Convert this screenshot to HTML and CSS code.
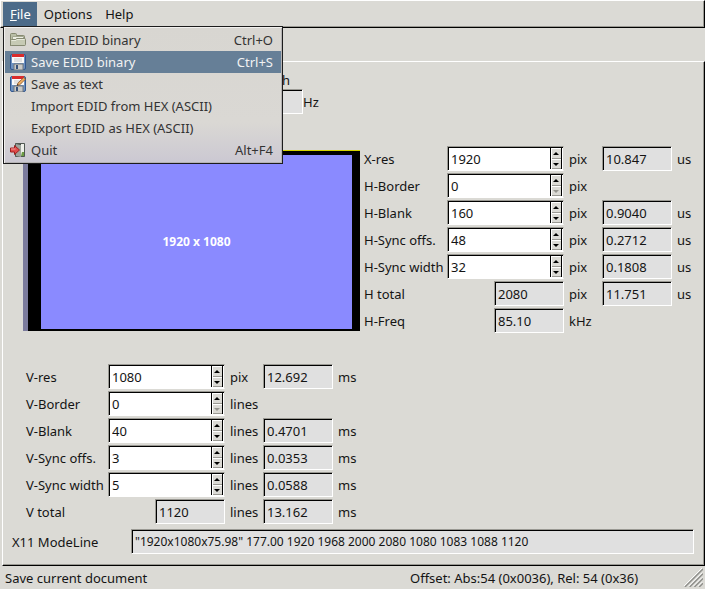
FILE: index.html
```html
<!DOCTYPE html>
<html lang="en">
<head>
<meta charset="utf-8">
<title>EDID editor</title>
<link rel="stylesheet" href="styles.css">
</head>
<body>
<header class="menubar">
  <nav class="menus">
    <button class="menu-title active" type="button"><u>F</u>ile</button>
    <button class="menu-title" type="button">Options</button>
    <button class="menu-title" type="button">Help</button>
  </nav>
  <div class="menu" role="menu">
    <button class="item" role="menuitem" type="button">
      <svg class="icon" viewBox="0 0 16 16"><path d="M.5 13.5v-11q0-1 1-1h4q1 0 1 1v1h7q1 0 1 1v9z" fill="#b9bea6" stroke="#85896f"/><path d="M2.500 7V4.500h11V7" fill="#eceee2" stroke="#a3a790"/><path d="M.5 13.500v-5q0-1 1-1h4l1-1h8q1 0 1 1v5q0 1-1 1h-13q-1 0-1-1z" fill="#c6cab4" stroke="#868a72"/><path d="M1.500 8.500h4.500l1-1h7.500" fill="none" stroke="#e6e9db"/></svg>
      <span>Open EDID binary</span><kbd>Ctrl+O</kbd>
    </button>
    <button class="item selected" role="menuitem" type="button">
      <svg class="icon" viewBox="0 0 16 16"><rect x=".5" y=".5" width="15" height="15" rx="1.5" fill="#6d91c0" stroke="#31578f"/><path d="M2 1h12v8H2z" fill="#fafafa"/><path d="M2 0h12v3H2z" fill="#d92b2b"/><path d="M4 5h8M4 7h8" stroke="#c8c8c8"/><path d="M4 10h9v6H4z" fill="#c9c9c6" stroke="#71777d"/><path d="M6 11h2v4H6z" fill="#355079"/></svg>
      <span>Save EDID binary</span><kbd>Ctrl+S</kbd>
    </button>
    <button class="item" role="menuitem" type="button">
      <svg class="icon" viewBox="0 0 16 16"><rect x=".5" y=".5" width="15" height="15" rx="1.5" fill="#6d91c0" stroke="#31578f"/><path d="M2 1h12v8H2z" fill="#fafafa"/><path d="M2 0h12v3H2z" fill="#d92b2b"/><path d="M4 5h8M4 7h8" stroke="#c8c8c8"/><path d="M4 10h9v6H4z" fill="#c9c9c6" stroke="#71777d"/><path d="M6 11h2v4H6z" fill="#355079"/><path d="M7 9.5l1-2.6 5.8-5.4 1.7 1.7L9.7 8.8z" fill="#edae63" stroke="#8b572a" stroke-width=".8"/><path d="M7 9.5l.5-1.5 1 1z" fill="#222"/></svg>
      <span>Save as text</span>
    </button>
    <button class="item" role="menuitem" type="button"><i class="icon"></i><span>Import EDID from HEX (ASCII)</span></button>
    <button class="item" role="menuitem" type="button"><i class="icon"></i><span>Export EDID as HEX (ASCII)</span></button>
    <button class="item" role="menuitem" type="button">
      <svg class="icon" viewBox="0 0 16 16"><path d="M5.500 1.500h9v13h-9z" fill="#3f4743" stroke="#505852"/><path d="M11 2h3v12h-3z" fill="#eef0ea"/><path d="M12 10h2v4h-3z" fill="#6c9b45"/><path d="M6 2l5 1v12l-5-1z" fill="#9ea49d"/><path d="M.5 6h4V3.500L9.500 8 4.500 12.500V10h-4z" fill="#e14b4b" stroke="#9d2020"/><path d="M1 7h4.500" stroke="#f29b9b"/></svg>
      <span>Quit</span><kbd>Alt+F4</kbd>
    </button>
  </div>
</header>

<main class="panel">
  <div class="rate">
    <label for="rate">h</label>
    <div class="rate-row"><input class="field out" id="rate" readonly><span>Hz</span></div>
  </div>

  <div class="upper">
    <div class="preview"><div class="active-area">1920 x 1080</div></div>
    <div class="grid horizontal">
      <label for="xres">X-res</label>
      <div class="spin"><input id="xres" value="1920"><div class="arrows"><button type="button" aria-label="Up"></button><button type="button" aria-label="Down"></button></div></div>
      <span>pix</span><input class="field out" aria-label="X-res time" value="10.847" readonly><span>us</span>

      <label for="hborder">H-Border</label>
      <div class="spin"><input id="hborder" value="0"><div class="arrows"><button type="button" aria-label="Up"></button><button type="button" aria-label="Down" disabled></button></div></div>
      <span class="wide">pix</span>

      <label for="hblank">H-Blank</label>
      <div class="spin"><input id="hblank" value="160"><div class="arrows"><button type="button" aria-label="Up"></button><button type="button" aria-label="Down"></button></div></div>
      <span>pix</span><input class="field out" aria-label="H-Blank time" value="0.9040" readonly><span>us</span>

      <label for="hoffs">H-Sync offs.</label>
      <div class="spin"><input id="hoffs" value="48"><div class="arrows"><button type="button" aria-label="Up"></button><button type="button" aria-label="Down"></button></div></div>
      <span>pix</span><input class="field out" aria-label="H-Sync offset time" value="0.2712" readonly><span>us</span>

      <label for="hwidth">H-Sync width</label>
      <div class="spin"><input id="hwidth" value="32"><div class="arrows"><button type="button" aria-label="Up"></button><button type="button" aria-label="Down"></button></div></div>
      <span>pix</span><input class="field out" aria-label="H-Sync width time" value="0.1808" readonly><span>us</span>

      <label for="htotal">H total</label>
      <input class="field out" id="htotal" value="2080" readonly>
      <span>pix</span><input class="field out" aria-label="H total time" value="11.751" readonly><span>us</span>

      <label for="hfreq">H-Freq</label>
      <input class="field out" id="hfreq" value="85.10" readonly>
      <span class="wide">kHz</span>
    </div>
  </div>

  <div class="grid vertical">
    <label for="vres">V-res</label>
    <div class="spin"><input id="vres" value="1080"><div class="arrows"><button type="button" aria-label="Up"></button><button type="button" aria-label="Down"></button></div></div>
    <span>pix</span><input class="field out" aria-label="V-res time" value="12.692" readonly><span>ms</span>

    <label for="vborder">V-Border</label>
    <div class="spin"><input id="vborder" value="0"><div class="arrows"><button type="button" aria-label="Up"></button><button type="button" aria-label="Down" disabled></button></div></div>
    <span class="wide">lines</span>

    <label for="vblank">V-Blank</label>
    <div class="spin"><input id="vblank" value="40"><div class="arrows"><button type="button" aria-label="Up"></button><button type="button" aria-label="Down"></button></div></div>
    <span>lines</span><input class="field out" aria-label="V-Blank time" value="0.4701" readonly><span>ms</span>

    <label for="voffs">V-Sync offs.</label>
    <div class="spin"><input id="voffs" value="3"><div class="arrows"><button type="button" aria-label="Up"></button><button type="button" aria-label="Down"></button></div></div>
    <span>lines</span><input class="field out" aria-label="V-Sync offset time" value="0.0353" readonly><span>ms</span>

    <label for="vwidth">V-Sync width</label>
    <div class="spin"><input id="vwidth" value="5"><div class="arrows"><button type="button" aria-label="Up"></button><button type="button" aria-label="Down"></button></div></div>
    <span>lines</span><input class="field out" aria-label="V-Sync width time" value="0.0588" readonly><span>ms</span>

    <label for="vtotal">V total</label>
    <input class="field out" id="vtotal" value="1120" readonly>
    <span>lines</span><input class="field out" aria-label="V total time" value="13.162" readonly><span>ms</span>
  </div>

  <div class="modeline">
    <label for="modeline">X11 ModeLine</label>
    <input class="field" id="modeline" value="&quot;1920x1080x75.98&quot; 177.00 1920 1968 2000 2080 1080 1083 1088 1120" readonly>
  </div>
</main>

<footer class="status">
  <span>Save current document</span>
  <span class="offset">Offset: Abs:54 (0x0036), Rel: 54 (0x36)</span>
  <svg class="grip" viewBox="0 0 20 20"><g stroke="#fff"><path d="M0 19L19 0M5 19L19 5M10 19L19 10M15 19l4-4"/></g><g stroke="#8f8f8b" stroke-width="1.500"><path d="M1 20L20 1M6 20L20 6M11 20l9-9M16 20l4-4"/></g></svg>
</footer>
</body>
</html>
```
FILE: styles.css
```css
:root {
  --face: #dbdad5;
  --shade: #9a9993;
  --out: #e0e0e0;
}

* {
  box-sizing: border-box;
}

body {
  margin: 0;
  min-height: 100vh;
  display: flex;
  flex-direction: column;
  background: var(--face);
  color: #141414;
  font: 13px/18px "Noto Sans", sans-serif;
}

button,
input {
  font: inherit;
  color: inherit;
  border: 0;
  border-radius: 0;
  margin: 0;
  padding: 0;
  min-width: 0;
}

/* Menu bar and open menu */
.menubar {
  position: relative;
  height: 28px;
  border: 1px solid #000;
  border-top-color: #fff;
  border-left-color: #fff;
  box-shadow: inset -1px -1px var(--shade);
}

.menus {
  display: flex;
  padding: 1px 2px;
}

.menu-title {
  height: 24px;
  padding: 0 6px 0 7px;
  background: none;
}

.menu-title.active {
  background: #4c6b89;
  color: #fff;
}

.menu {
  position: absolute;
  z-index: 1;
  top: 25px;
  left: 2px;
  width: 280px;
  padding: 2px 1px;
  border: 1px solid #1c1c1c;
  background: linear-gradient(#d8d6d1, #dad8d4 70%, #cbc8d2);
  box-shadow: inset 1px 1px #f1f0ee, inset -1px -1px #b5b3b4;
  color: #333;
}

.item {
  display: flex;
  align-items: center;
  gap: 5px;
  width: 100%;
  height: 22px;
  padding: 0 8px 0 5px;
  background: none;
  text-align: left;
}

.item.selected {
  background: #667f97;
  color: #f2f2f2;
}

.icon {
  width: 16px;
  height: 16px;
}

kbd {
  margin-left: auto;
  font: inherit;
}

/* Timing page */
.panel {
  flex: 1;
  display: flex;
  flex-direction: column;
  margin: 33px 0 0 2px;
  padding: 9px 1px 0 0;
  border: 1px solid #000;
  border-top-color: #fff;
  border-left-color: #fff;
  box-shadow: inset -1px -1px var(--shade);
}

.rate {
  padding-left: 230px;
}

.rate label {
  display: block;
  padding-left: 49px;
}

.rate-row {
  display: flex;
  align-items: center;
}

.upper {
  display: flex;
  align-items: flex-start;
  gap: 4px;
  margin: 32px 0 31px 20px;
}

.preview {
  flex: 1;
  display: flex;
  height: 181px;
  margin-top: 4px;
  padding: 4px 8px 2px 13px;
  border-top: 1px solid #d4d400;
  border-left: 5px solid #7b7b9c;
  background: #000;
}

.active-area {
  flex: 1;
  display: flex;
  align-items: center;
  justify-content: center;
  background: #8a8aff;
  color: #fff;
  font-size: 12px;
  font-weight: 700;
}

.grid {
  display: grid;
  grid-auto-rows: 25px;
  align-items: center;
  row-gap: 2px;
}

.horizontal {
  grid-template-columns: 83px 117px 38px 70px 31px;
}

.vertical {
  grid-template-columns: 82px 117px 38px 70px 31px;
  margin-left: 23px;
}

.grid span {
  padding-left: 5px;
}

.wide {
  grid-column: span 3;
}

.field,
.spin {
  height: 25px;
  border: 1px solid;
  border-color: var(--shade) #fff #fff var(--shade);
  box-shadow: inset 1px 1px #000;
}

.field {
  padding: 0 3px;
  background: var(--out);
}

.out {
  width: 70px;
  justify-self: end;
}

.spin {
  display: flex;
  padding: 1px;
  border-right-color: var(--face);
  background: #fff;
}

.spin input {
  flex: 1;
  width: 0;
  padding: 0 2px;
  background: none;
}

.arrows {
  display: grid;
  grid-template-rows: 11px 10px;
  width: 12px;
  border: solid #000;
  border-width: 0 1px;
}

.arrows button {
  display: grid;
  place-items: center;
  background: var(--face);
  box-shadow: inset 1px 1px #fff, inset 0 -1px var(--shade);
}

.arrows button::before {
  content: "";
  border: solid transparent;
  border-width: 0 3px 3px;
  border-bottom-color: #000;
}

.arrows button:last-child::before {
  border-width: 3px 3px 0;
  border-top-color: #000;
}

.arrows button:disabled:last-child::before {
  border-top-color: #96958f;
}

.modeline {
  display: flex;
  align-items: center;
  margin: 5px 9px 10px;
}

.modeline label {
  width: 119px;
}

.modeline .field {
  flex: 1;
  font-size: 12px;
}

/* Status bar */
.status {
  display: flex;
  align-items: center;
  height: 23px;
  padding: 0 2px 0 5px;
}

.status span {
  flex: 1 1 0;
}

.status .offset {
  flex: 0 0 274px;
}

.grip {
  width: 19px;
  height: 19px;
}
```
